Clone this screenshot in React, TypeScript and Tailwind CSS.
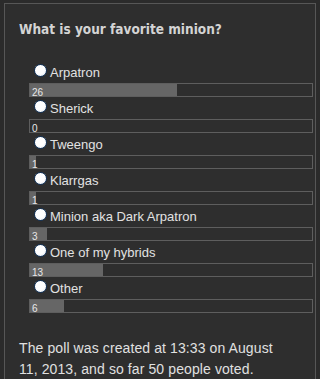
const options = [
  { label: "Arpatron", votes: 26 },
  { label: "Sherick", votes: 0 },
  { label: "Tweengo", votes: 1 },
  { label: "Klarrgas", votes: 1 },
  { label: "Minion aka Dark Arpatron", votes: 3 },
  { label: "One of my hybrids", votes: 13 },
  { label: "Other", votes: 6 },
];

const total = 50;

export default function App() {
  return (
    <div className="h-[379px] overflow-hidden bg-[#2b2b2b] pl-1 pr-1 pt-[3px] font-['Liberation_Sans',Arial,sans-serif] text-[#e2e2e2]">
      <div className="h-full border border-b-0 border-[#575757] bg-[#2e2e2e] pl-[14px] pr-[2px] pt-[17px]">
        <h2 className="font-['DejaVu_Sans_Condensed','DejaVu_Sans',sans-serif] text-[13.5px] font-bold leading-[17px] text-[#d4d4d4]">
          What is your favorite minion?
        </h2>

        {/* Options */}
        <div className="ml-[10px] mt-[23px] flex flex-col">
          {options.map((o) => (
            <div key={o.label} className="flex flex-col">
              <label className="flex h-[22px] items-center gap-[3px] pl-[5px] text-[13px] leading-none">
                <span className="mb-[3px] h-[13px] w-[13px] rounded-full border-[1.5px] border-[#16365c] bg-[radial-gradient(circle_at_45%_40%,#ffffff_50%,#d6dee8)]" />
                <span>{o.label}</span>
              </label>
              <div className="relative h-[14px] border border-[#5e5e5e]">
                <div
                  className="absolute inset-y-0 left-0 bg-[#666666]"
                  style={{ width: `${(o.votes / total) * 100}%` }}
                />
                <span className="absolute left-[2px] top-[4px] text-[10px] leading-[10px] text-[#e8e8e8]">
                  {o.votes}
                </span>
              </div>
            </div>
          ))}
        </div>

        <p className="mt-[25px] pr-6 text-[14px] leading-[21px] tracking-[0.1px] text-[#e0e0e0]">
          The poll was created at 13:33 on August 11, 2013, and so far 50 people voted.
        </p>
      </div>
    </div>
  );
}
